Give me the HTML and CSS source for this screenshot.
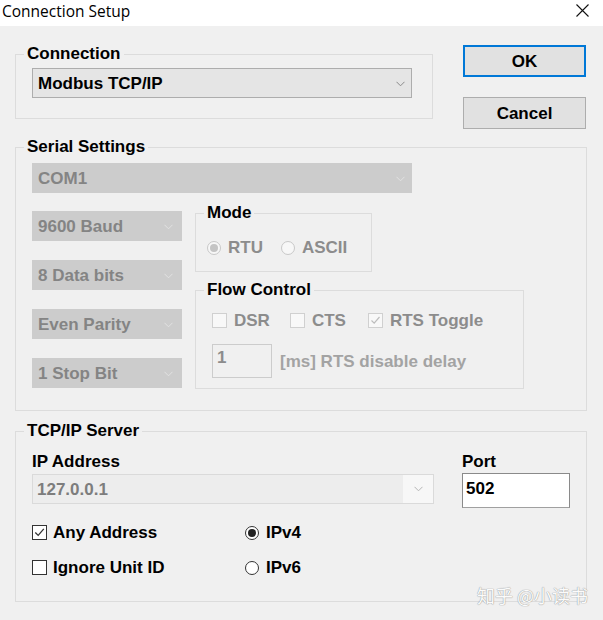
FILE: index.html
```html
<!DOCTYPE html>
<html>
<head>
<meta charset="utf-8">
<link rel="stylesheet" href="styles.css">
</head>
<body>
<div class="titlebar">
  <span class="title">Connection Setup</span>
  <svg class="close" width="13" height="13" viewBox="0 0 13 13"><path d="M0.5 0.5L12.5 12.5M12.5 0.5L0.5 12.5" stroke="#111" stroke-width="1.1" fill="none"/></svg>
</div>
<div class="content">
  <div class="top-row">
    <fieldset class="group connection">
      <legend>Connection</legend>
      <div class="combo active wide">
        <span>Modbus TCP/IP</span>
        <svg class="chev" width="9" height="6" viewBox="0 0 9 6"><path d="M0.5 0.8L4.5 4.8L8.5 0.8" stroke="#8a8a8a" stroke-width="1" fill="none"/></svg>
      </div>
    </fieldset>
    <div class="buttons">
      <div class="btn default">OK</div>
      <div class="btn">Cancel</div>
    </div>
  </div>

  <fieldset class="group serial">
    <legend>Serial Settings</legend>
    <div class="combo disabled wide">
      <span>COM1</span>
      <svg class="chev" width="9" height="6" viewBox="0 0 9 6"><path d="M0.5 0.8L4.5 4.8L8.5 0.8" stroke="#e2e2e2" stroke-width="1" fill="none"/></svg>
    </div>
    <div class="serial-row">
      <div class="left-col">
        <div class="combo disabled small"><span>9600 Baud</span><svg class="chev" width="9" height="6" viewBox="0 0 9 6"><path d="M0.5 0.8L4.5 4.8L8.5 0.8" stroke="#e2e2e2" stroke-width="1" fill="none"/></svg></div>
        <div class="combo disabled small"><span>8 Data bits</span><svg class="chev" width="9" height="6" viewBox="0 0 9 6"><path d="M0.5 0.8L4.5 4.8L8.5 0.8" stroke="#e2e2e2" stroke-width="1" fill="none"/></svg></div>
        <div class="combo disabled small"><span>Even Parity</span><svg class="chev" width="9" height="6" viewBox="0 0 9 6"><path d="M0.5 0.8L4.5 4.8L8.5 0.8" stroke="#e2e2e2" stroke-width="1" fill="none"/></svg></div>
        <div class="combo disabled small"><span>1 Stop Bit</span><svg class="chev" width="9" height="6" viewBox="0 0 9 6"><path d="M0.5 0.8L4.5 4.8L8.5 0.8" stroke="#e2e2e2" stroke-width="1" fill="none"/></svg></div>
      </div>
      <div class="right-col">
        <fieldset class="group mode">
          <legend>Mode</legend>
          <div class="opt-row mode-row">
            <span class="opt dis"><span class="radio dis checked"></span>RTU</span>
            <span class="opt dis"><span class="radio dis"></span>ASCII</span>
          </div>
        </fieldset>
        <fieldset class="group flow">
          <legend>Flow Control</legend>
          <div class="opt-row flow-row">
            <span class="opt dis dsr"><span class="check dis"></span>DSR</span>
            <span class="opt dis cts"><span class="check dis"></span>CTS</span>
            <span class="opt dis"><span class="check dis"><svg width="13" height="13" viewBox="0 0 13 13"><path d="M2.5 6.5L5.2 9.2L10.5 3" stroke="#bdbdbd" stroke-width="1.2" fill="none"/></svg></span>RTS Toggle</span>
          </div>
          <div class="delay-row">
            <div class="delay-input">1</div>
            <span class="delay-label">[ms] RTS disable delay</span>
          </div>
        </fieldset>
      </div>
    </div>
  </fieldset>

  <fieldset class="group tcp">
    <legend>TCP/IP Server</legend>
    <div class="ip-grid">
      <div class="field">
        <div class="label">IP Address</div>
        <div class="combo ipcombo">
          <span>127.0.0.1</span>
          <div class="ip-arrow"><svg width="9" height="6" viewBox="0 0 9 6"><path d="M0.5 0.8L4.5 4.8L8.5 0.8" stroke="#b5b5b5" stroke-width="1" fill="none"/></svg></div>
        </div>
      </div>
      <div class="field">
        <div class="label">Port</div>
        <div class="port-input">502</div>
      </div>
    </div>
    <div class="opt-grid">
      <span class="opt"><span class="check on"><svg width="13" height="13" viewBox="0 0 13 13"><path d="M2.3 6.5L5.2 9.4L10.8 2.8" stroke="#333" stroke-width="1.3" fill="none"/></svg></span>Any Address</span>
      <span class="opt ipv"><span class="radio on checked"></span>IPv4</span>
      <span class="opt"><span class="check on"></span>Ignore Unit ID</span>
      <span class="opt ipv"><span class="radio on"></span>IPv6</span>
    </div>
  </fieldset>

  <div class="watermark">知乎 @小读书</div>
</div>
</body>
</html>
```

FILE: styles.css
```css
* { box-sizing: border-box; }

body {
  margin: 0;
  width: 603px;
  height: 620px;
  overflow: hidden;
  background: #f0f0f0;
  font-family: "Liberation Sans", Arial, sans-serif;
  font-weight: bold;
  font-size: 17px;
  color: #000;
}

.titlebar {
  height: 26px;
  background: #fff;
  display: flex;
  align-items: center;
  justify-content: space-between;
  padding: 0 14px 5px 2px;
}

.title {
  font-family: "Open Sans", "Noto Sans", sans-serif;
  font-weight: normal;
  font-size: 15.5px;
  line-height: 20px;
}

.close { display: block; }

.content {
  position: relative;
  height: 594px;
  padding: 20px 16px 0 15px;
}

.top-row {
  display: flex;
  align-items: flex-start;
}

.group {
  margin: 0;
  border: 1px solid #dcdcdc;
  min-width: 0;
  padding: 0;
}

.group legend {
  padding: 0 3px;
  line-height: 16px;
  font-size: 17px;
  margin-left: -8px;
}

.connection {
  width: 418px;
  padding: 6px 19px 20px 16px;
}

.buttons {
  margin-left: auto;
  margin-right: 1px;
  margin-top: -1px;
  width: 123px;
  display: flex;
  flex-direction: column;
  gap: 20px;
}

.btn {
  height: 32px;
  background: #e1e1e1;
  border: 1px solid #adadad;
  display: flex;
  align-items: center;
  justify-content: center;
  font-size: 17px;
  padding-top: 2px;
}

.btn.default {
  border: 2px solid #0078d7;
}

.combo {
  height: 30px;
  display: flex;
  align-items: center;
  justify-content: space-between;
  padding: 2px 6px 0 5px;
  border: 1px solid transparent;
}

.combo .chev { margin-bottom: 1px; }

.combo.wide { width: 380px; }
.combo.small { width: 150px; padding-right: 8px; }

.combo.active {
  background: #e5e5e5;
  border-color: #adadad;
}

.combo.disabled {
  background: #cccccc;
  border-color: #cccccc;
  color: #848484;
}

.serial {
  margin-top: 10px;
  padding: 8px 20px 21px 16px;
}

.serial-row {
  display: flex;
  gap: 13px;
  margin-top: 12px;
}

.left-col {
  display: flex;
  flex-direction: column;
  gap: 19px;
  padding-top: 6px;
}

.right-col {
  display: flex;
  flex-direction: column;
  gap: 10px;
}

.mode {
  width: 177px;
  padding: 17px 10px 13px 11px;
}

.mode legend { margin-left: -3px; }

.flow {
  width: 329px;
  padding: 13px 10px 10px 16px;
}

.opt-row {
  display: flex;
  align-items: center;
  height: 20px;
}

.mode-row { gap: 18px; }
.flow-row .dsr { margin-right: 20px; }
.flow-row .cts { margin-right: 22px; }

.opt {
  display: inline-flex;
  align-items: center;
  gap: 7px;
  height: 20px;
  white-space: nowrap;
}

.opt.dis { color: #8c8c8c; }

.radio {
  width: 14px;
  height: 14px;
  border-radius: 50%;
  border: 1px solid #333;
  background: #fff;
  display: inline-flex;
  align-items: center;
  justify-content: center;
  flex: none;
  margin-bottom: 1px;
}

.radio.checked::after {
  content: "";
  width: 8px;
  height: 8px;
  border-radius: 50%;
  background: #222;
}

.radio.dis {
  border-color: #c8c8c8;
  background: #f7f7f7;
}

.radio.dis.checked::after {
  background: #c4c4c4;
}

.check {
  width: 15px;
  height: 15px;
  border: 1px solid #333;
  background: #fff;
  display: inline-flex;
  align-items: center;
  justify-content: center;
  flex: none;
  margin-bottom: 2px;
}

.check svg { display: block; }

.check.dis {
  border-color: #d0d0d0;
  background: #f8f8f8;
}

.delay-row {
  display: flex;
  align-items: center;
  gap: 8px;
  margin-top: 13px;
}

.delay-input {
  width: 60px;
  height: 34px;
  border: 1px solid #cccccc;
  background: #f0f0f0;
  color: #8c8c8c;
  padding: 4px 0 0 4px;
  font-size: 17px;
  line-height: 18px;
}

.delay-label {
  color: #a3a3a3;
  padding-top: 2px;
}

.tcp {
  margin-top: 12px;
  padding: 15px 16px 23px 16px;
}

.ip-grid {
  display: grid;
  grid-template-columns: 402px 108px;
  column-gap: 28px;
}

.label {
  line-height: 16px;
  height: 16px;
}

.ipcombo {
  margin-top: 4px;
  height: 30px;
  background: #ededed;
  border-color: #dadada;
  color: #7d7d7d;
  padding: 1px 0 0 4px;
}

.ip-arrow {
  width: 30px;
  height: 28px;
  background: #f7f7f7;
  display: flex;
  align-items: center;
  justify-content: center;
  margin-top: -1px;
}

.port-input {
  margin-top: 3px;
  height: 35px;
  border: 1px solid #8a8a8a;
  border-bottom-color: #a0a0a0;
  background: #fff;
  padding: 6px 0 0 3px;
  line-height: 18px;
}

.opt-grid {
  display: grid;
  grid-template-columns: 213px auto;
  grid-auto-rows: 20px;
  row-gap: 15px;
  margin-top: 15px;
}

.opt-grid .opt { gap: 6px; }
.opt-grid .ipv { gap: 7px; }

.watermark {
  position: absolute;
  right: 15px;
  bottom: 15px;
  font-family: "Noto Sans CJK SC", sans-serif;
  font-weight: normal;
  font-size: 18px;
  line-height: 20px;
  color: #fbfbfb;
  text-shadow: 0 0 1px #9a9a9a, 0 0 1px #9a9a9a;
}
```
